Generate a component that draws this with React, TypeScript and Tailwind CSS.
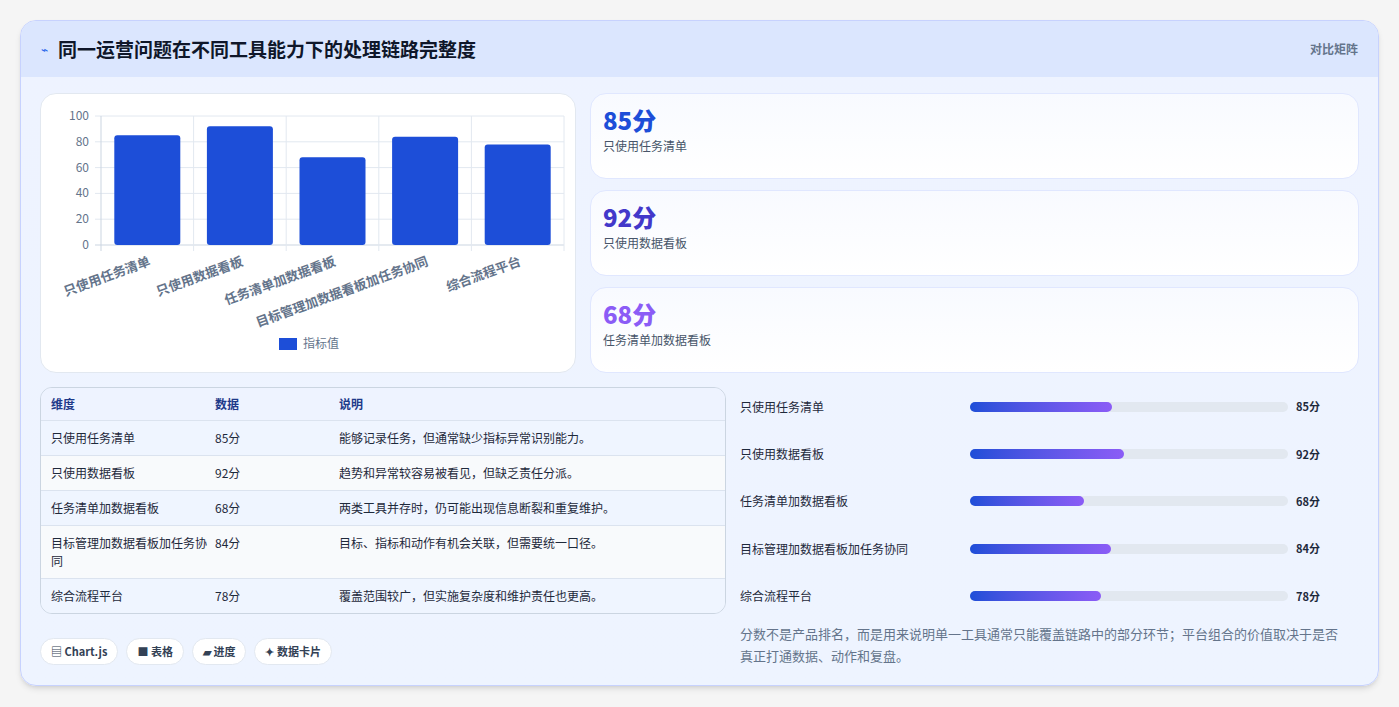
import React from 'react';

const rows = [
  { name: '只使用任务清单', v: 85, desc: '能够记录任务，但通常缺少指标异常识别能力。' },
  { name: '只使用数据看板', v: 92, desc: '趋势和异常较容易被看见，但缺乏责任分派。' },
  { name: '任务清单加数据看板', v: 68, desc: '两类工具并存时，仍可能出现信息断裂和重复维护。' },
  { name: '目标管理加数据看板加任务协同', v: 84, desc: '目标、指标和动作有机会关联，但需要统一口径。' },
  { name: '综合流程平台', v: 78, desc: '覆盖范围较广，但实施复杂度和维护责任也更高。' },
];

const font = { fontFamily: '"Noto Sans CJK SC", "Noto Sans", sans-serif' };

function Chart() {
  const x0 = 60, x1 = 523, yTop = 22, yBot = 151;
  const cw = (x1 - x0) / 5;
  return (
    <svg width="535" height="279" viewBox="0 0 535 279">
      {[0, 20, 40, 60, 80, 100].map((t) => {
        const y = yBot - (t / 100) * (yBot - yTop);
        return (
          <g key={t}>
            <line x1={x0 - 6} x2={x1} y1={y} y2={y} stroke={t === 0 ? '#cbd5e1' : '#e2e8f0'} />
            <text x={x0 - 12} y={y + 4} textAnchor="end" fontSize="12" fill="#64748b">{t}</text>
          </g>
        );
      })}
      {[0, 1, 2, 3, 4, 5].map((i) => (
        <line key={i} x1={x0 + i * cw} x2={x0 + i * cw} y1={yTop} y2={yBot + 6} stroke={i === 0 ? '#cbd5e1' : '#e2e8f0'} />
      ))}
      {rows.map((r, i) => {
        const h = (r.v / 100) * (yBot - yTop);
        const cx = x0 + i * cw + cw / 2;
        return (
          <g key={r.name}>
            <rect x={cx - 33} y={yBot - h} width="66" height={h} rx="3" fill="#1d4ed8" />
            <text x={cx + 4} y={yBot + 20} textAnchor="end" fontSize="13" fontWeight="600" fill="#64748b" transform={`rotate(-20 ${cx + 4} ${yBot + 20})`}>{r.name}</text>
          </g>
        );
      })}
      <rect x="238" y="244" width="18" height="12" fill="#1d4ed8" />
      <text x="262" y="254" fontSize="12" fill="#64748b">指标值</text>
    </svg>
  );
}

export default function App() {
  const statColors = ['text-[#1d4ed8]', 'text-[#4338ca]', 'text-[#8b5cf6]'];
  return (
    <div className="min-h-[707px] bg-[#f5f5f5] p-5" style={font}>
      <div className="rounded-2xl border border-[#c7d2fe] bg-gradient-to-b from-[#eef3ff] to-[#eef4ff] shadow-md overflow-hidden">
        <div className="h-14 flex items-center justify-between px-5 bg-[#dbe6fe]">
          <div className="flex items-center gap-2.5">
            <span className="text-[#2563eb] text-xs">⌁</span>
            <h1 className="text-[19px] font-bold text-[#0f172a]">同一运营问题在不同工具能力下的处理链路完整度</h1>
          </div>
          <span className="text-xs font-semibold text-[#64748b]">对比矩阵</span>
        </div>
        <div className="px-[19px] pt-4 pb-[18px]">
          <div className="flex gap-3.5">
            <div className="w-[536px] h-[280px] rounded-2xl border border-[#e2e8f0] bg-white shrink-0">
              <Chart />
            </div>
            <div className="flex-1 flex flex-col gap-[11px]">
              {rows.slice(0, 3).map((r, i) => (
                <div key={r.name} className="h-[86px] rounded-2xl border border-[#e0e7ff] bg-gradient-to-b from-[#f8faff] to-white px-3 pt-2.5">
                  <div className={`text-2xl font-extrabold ${statColors[i]}`}>{r.v}分</div>
                  <div className="text-xs text-[#475569] mt-0.5">{r.name}</div>
                </div>
              ))}
            </div>
          </div>
          <div className="flex gap-3.5 mt-3.5">
            <div className="w-[686px] shrink-0">
              <div className="rounded-xl border border-[#cbd5e1] overflow-hidden text-xs text-[#1e293b]">
                <div className="grid grid-cols-[164px_124px_1fr] h-[33px] items-center px-2.5 bg-[#eef3ff] font-bold text-[#1e3a8a] border-b border-[#dbe3ef]">
                  <span>维度</span><span>数据</span><span>说明</span>
                </div>
                {rows.map((r, i) => (
                  <div key={r.name} className={`grid grid-cols-[164px_124px_1fr] px-2.5 py-2 leading-[18px] ${i % 2 ? 'bg-[#f8fafc]' : 'bg-[#eff5ff]'} ${i < 4 ? 'border-b border-[#dbe3ef]' : ''}`}>
                    <span className="pr-2">{r.name}</span><span>{r.v}分</span><span>{r.desc}</span>
                  </div>
                ))}
              </div>
              <div className="flex gap-2 mt-6">
                {['▤ Chart.js', '■ 表格', '▰ 进度', '✦ 数据卡片'].map((c) => (
                  <span key={c} className="h-[27px] px-2.5 flex items-center rounded-full bg-white border border-[#e2e8f0] text-[11px] font-semibold text-[#334155]">{c}</span>
                ))}
              </div>
            </div>
            <div className="flex-1 pr-[18px]">
              <div className="flex flex-col -mt-[4px]">
                {rows.map((r) => (
                  <div key={r.name} className="h-[47.3px] flex items-center text-xs">
                    <span className="w-[230px] text-[#1e293b]">{r.name}</span>
                    <div className="w-[318px] h-2.5 rounded-full bg-[#e2e8f0]">
                      <div className="h-2.5 rounded-full bg-gradient-to-r from-[#1d4ed8] to-[#8b5cf6]" style={{ width: `${(r.v / 1.9).toFixed(1)}%` }} />
                    </div>
                    <span className="ml-2 font-bold text-[#1e293b] text-[11px]">{r.v}分</span>
                  </div>
                ))}
              </div>
              <p className="text-[13px] leading-[22px] text-[#64748b] mt-1">分数不是产品排名，而是用来说明单一工具通常只能覆盖链路中的部分环节；平台组合的价值取决于是否真正打通数据、动作和复盘。</p>
            </div>
          </div>
        </div>
      </div>
    </div>
  );
}
